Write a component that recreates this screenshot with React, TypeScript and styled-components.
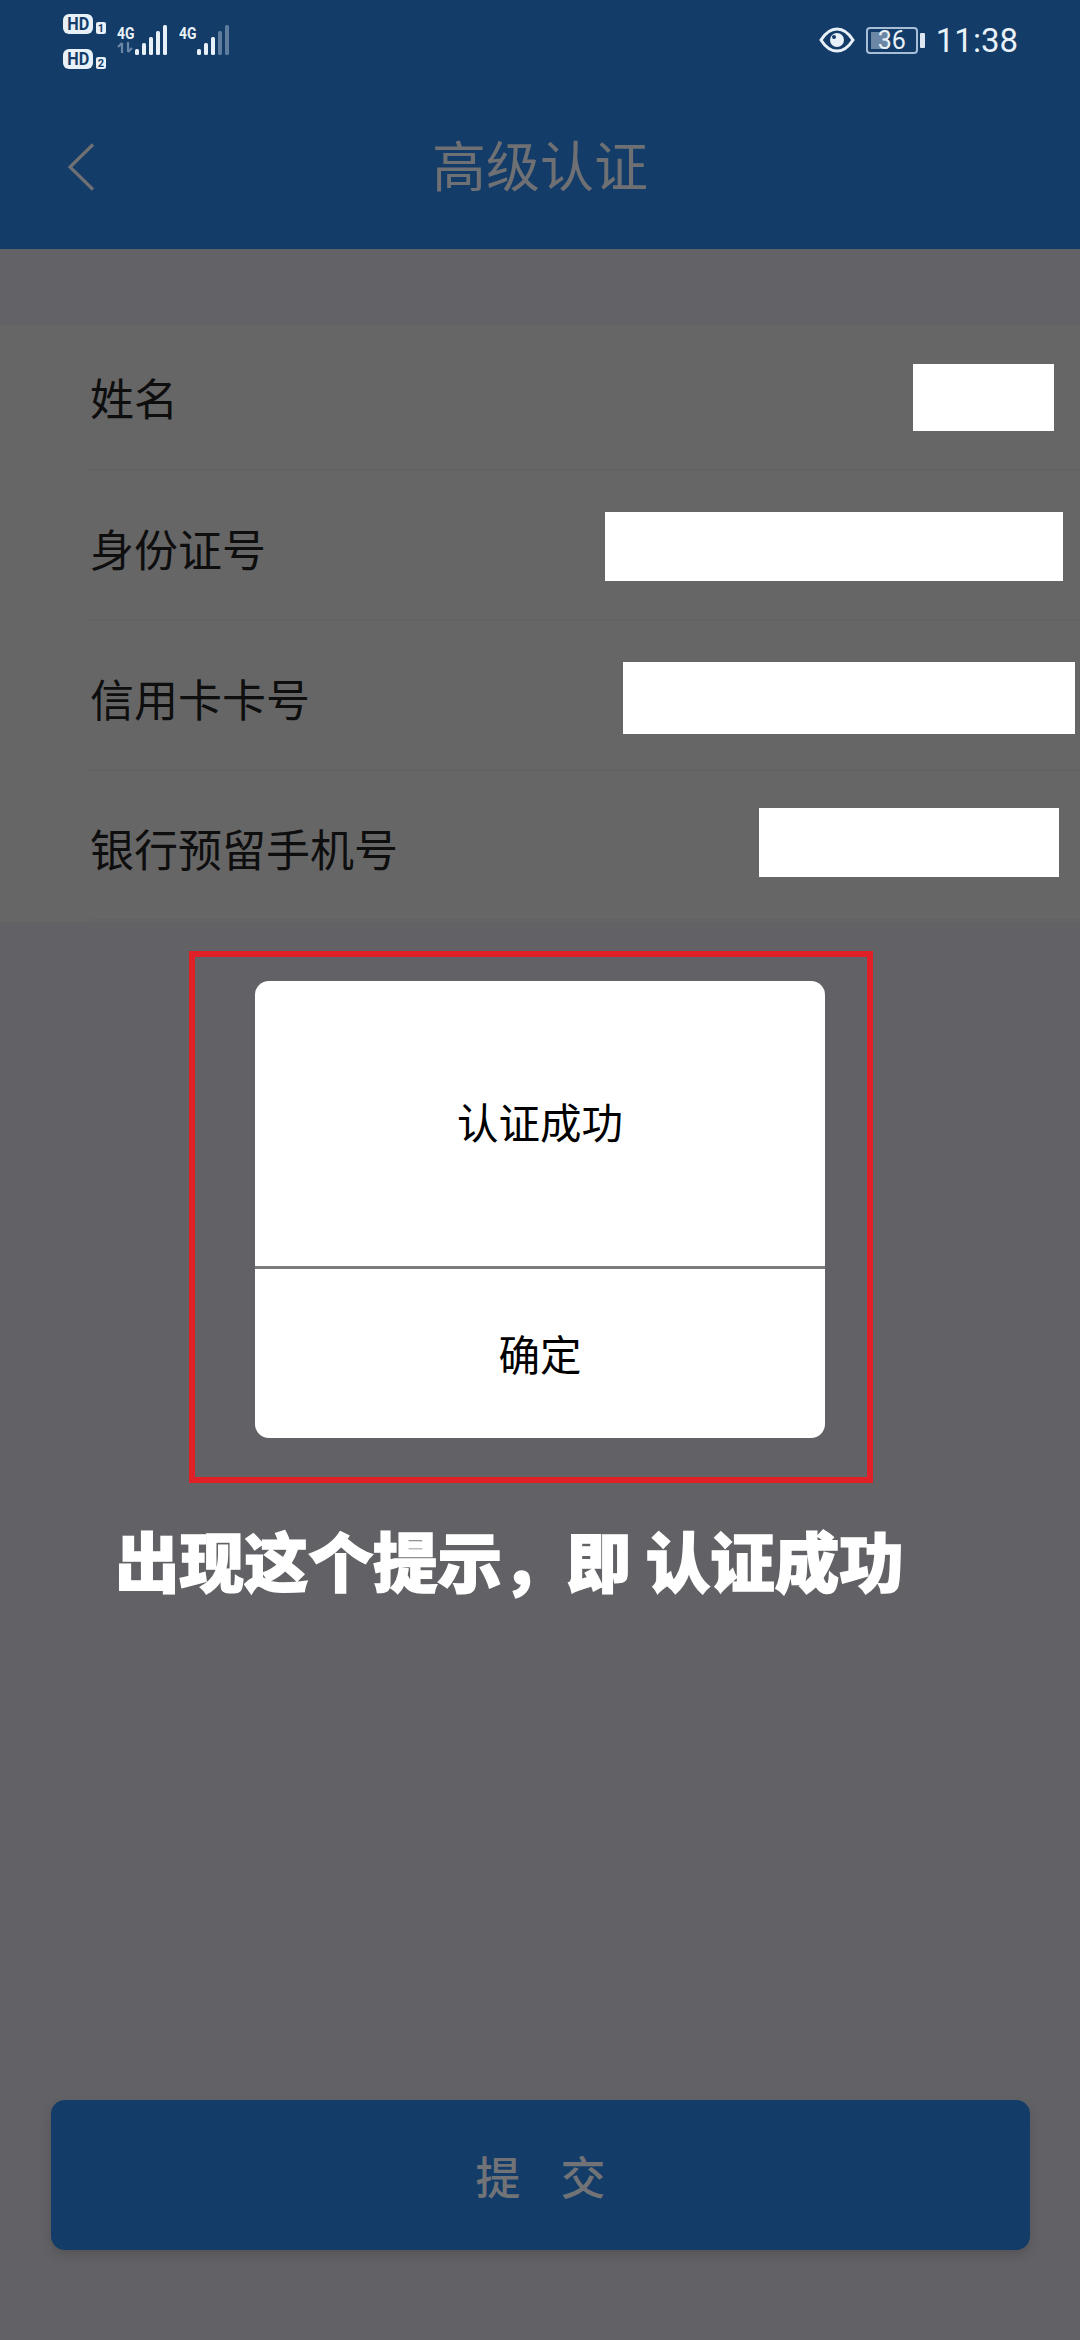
import styled, { createGlobalStyle } from "styled-components";

const GlobalStyle = createGlobalStyle`
  html, body {
    margin: 0;
    padding: 0;
    background: #626266;
  }
  * {
    box-sizing: border-box;
  }
`;

const Page = styled.div`
  width: 1080px;
  height: 2340px;
  display: flex;
  flex-direction: column;
  overflow: hidden;
  background: #626266;
  font-family: "Noto Sans CJK SC", "Liberation Sans", sans-serif;
`;

const Header = styled.header`
  height: 249px;
  flex-shrink: 0;
  display: flex;
  flex-direction: column;
  background: #133c68;
`;

const StatusBar = styled.div`
  height: 70px;
  padding: 14px 63px 0;
  display: flex;
  justify-content: space-between;
  align-items: flex-start;
`;

const StatusLeft = styled.div`
  display: flex;
  align-items: flex-start;
`;

const SimStack = styled.div`
  display: flex;
  flex-direction: column;
  gap: 15px;
`;

const SimRow = styled.div`
  display: flex;
  align-items: flex-end;
  gap: 3px;
`;

const HdBadge = styled.span`
  width: 30px;
  height: 20px;
  display: flex;
  align-items: center;
  justify-content: center;
  border-radius: 6px;
  background: #e8f0f8;
  color: #133c68;
  font: 700 18px/1 "Roboto", sans-serif;
`;

const HdLetters = styled.span`
  display: block;
  transform: scaleX(0.9);
`;

const SimIndex = styled.span`
  width: 10px;
  height: 12px;
  display: flex;
  align-items: center;
  justify-content: center;
  border-radius: 2px;
  background: #e8f0f8;
  color: #133c68;
  font: 700 11px/1 "Roboto", sans-serif;
`;

const Network = styled.div<{ $gap: number }>`
  margin: 11px 0 0 ${(p) => p.$gap}px;
  display: flex;
  align-items: flex-start;
`;

const NetworkLabel = styled.div`
  width: 18px;
  height: 30px;
  display: flex;
  flex-direction: column;
`;

const NetworkText = styled.span`
  display: block;
  height: 17px;
  color: #e8f0f8;
  font: 700 17px/17px "Roboto", sans-serif;
  white-space: nowrap;
  transform: scaleX(0.82);
  transform-origin: left center;
`;

const StatusRight = styled.div`
  display: flex;
  align-items: center;
  height: 40px;
  margin-top: 6px;
`;

const EyeIcon = styled.svg`
  width: 36px;
  height: 28px;
`;

const Battery = styled.div`
  position: relative;
  width: 52px;
  height: 27px;
  margin-left: 11px;
  border: 2px solid #a7bed6;
  border-radius: 4px;
  display: flex;
  align-items: center;
  justify-content: center;
  color: #e8f0f8;
  font: 400 25px/1 "Roboto", sans-serif;
`;

const BatteryFill = styled.span`
  position: absolute;
  left: 3px;
  top: 3px;
  bottom: 3px;
  width: 17px;
  background: #6c86a5;
`;

const BatteryText = styled.span`
  position: relative;
`;

const BatteryNub = styled.span`
  width: 5px;
  height: 15px;
  margin-left: 2px;
  border-radius: 1px;
  background: #dfe8f2;
`;

const Clock = styled.span`
  margin-left: 11px;
  margin-right: -1px;
  color: #e8f0f8;
  font: 400 33px/1 "Roboto", sans-serif;
`;

const NavRow = styled.div`
  flex: 1;
  padding: 9px 0 0 68px;
  display: grid;
  grid-template-columns: 404px 136px 1fr;
  align-items: center;
`;

const BackIcon = styled.svg`
  width: 28px;
  height: 48px;
  margin-top: 6px;
`;

const Title = styled.h1`
  margin: 0;
  color: #6f7073;
  font-size: 54px;
  font-weight: 400;
  line-height: 1;
  white-space: nowrap;
  justify-self: center;
`;

const Band = styled.div`
  height: 76px;
  flex-shrink: 0;
  background: #636367;
`;

const Form = styled.section`
  height: 597px;
  flex-shrink: 0;
  padding-left: 90px;
  background: #666667;
`;

const FormRow = styled.div<{ $first?: boolean }>`
  height: ${(p) => (p.$first ? 146 : 150)}px;
  padding-top: ${(p) => (p.$first ? 0 : 6)}px;
  display: flex;
  align-items: center;
  justify-content: space-between;
  border-bottom: 2px solid #636365;
`;

const RowLabel = styled.span`
  color: #0e0e0e;
  font-size: 44px;
  line-height: 1;
  white-space: nowrap;
`;

const Redaction = styled.div<{ $width: number; $height: number; $right: number; $lift: number }>`
  width: ${(p) => p.$width}px;
  height: ${(p) => p.$height}px;
  margin-right: ${(p) => p.$right}px;
  margin-bottom: ${(p) => p.$lift}px;
  background: #fff;
`;

const RedFrame = styled.div`
  width: 684px;
  height: 532px;
  margin: 29px 0 0 189px;
  padding: 24px 0 0 60px;
  flex-shrink: 0;
  border: 6px solid #e01f26;
`;

const Dialog = styled.div`
  width: 570px;
  height: 457px;
  display: flex;
  flex-direction: column;
  border-radius: 14px;
  background: #fff;
`;

const DialogMessage = styled.div`
  height: 288px;
  padding-bottom: 4px;
  display: flex;
  align-items: center;
  justify-content: center;
  border-bottom: 3px solid #7c7c7e;
  color: #000;
  font-size: 41.5px;
  line-height: 1;
`;

const DialogAction = styled.div`
  flex: 1;
  display: flex;
  align-items: center;
  justify-content: center;
  color: #000;
  font-size: 41.5px;
  line-height: 1;
`;

const Annotation = styled.p`
  margin: 36px 0 0 115px;
  color: #fff;
  font-size: 64.5px;
  font-weight: 900;
  line-height: 80px;
  white-space: pre;
  -webkit-text-stroke: 1.5px #fff;
`;

const SubmitButton = styled.button`
  width: 979px;
  height: 150px;
  margin: auto 0 90px 51px;
  flex-shrink: 0;
  border: none;
  border-radius: 14px;
  background: #133c68;
  box-shadow: 0 5px 10px rgba(40, 40, 40, 0.22);
  color: #727376;
  font-family: inherit;
  font-size: 45px;
  font-weight: 500;
  letter-spacing: 40px;
  text-indent: 40px;
`;

const bars = [
  { x: 0, y: 24, h: 6 },
  { x: 7, y: 18, h: 12 },
  { x: 14, y: 12, h: 18 },
  { x: 21, y: 6, h: 24 },
  { x: 28, y: 0, h: 30 },
];

const Signal = ({ level }: { level: number }) => (
  <svg width="32" height="30" viewBox="0 0 32 30">
    {bars.map((b, i) => (
      <rect
        key={b.x}
        x={b.x}
        y={b.y}
        width="4"
        height={b.h}
        rx="1.5"
        fill={i < level ? "#e8f0f8" : "#5f7c9c"}
      />
    ))}
  </svg>
);

const DataArrows = () => (
  <svg width="17" height="11" viewBox="0 0 17 11">
    <path
      d="M5 11V1M1 5l4-4M11 0v10M15 6l-4 4"
      stroke="#6c86a5"
      strokeWidth="2.2"
      fill="none"
    />
  </svg>
);

const rows = [
  { label: "姓名", width: 141, height: 67, right: 26, lift: 0 },
  { label: "身份证号", width: 458, height: 69, right: 17, lift: 3 },
  { label: "信用卡卡号", width: 452, height: 72, right: 5, lift: 0 },
  { label: "银行预留手机号", width: 300, height: 69, right: 21, lift: 12 },
];

export default function App() {
  return (
    <Page>
      <GlobalStyle />
      <Header>
        <StatusBar>
          <StatusLeft>
            <SimStack>
              <SimRow>
                <HdBadge><HdLetters>HD</HdLetters></HdBadge>
                <SimIndex>1</SimIndex>
              </SimRow>
              <SimRow>
                <HdBadge><HdLetters>HD</HdLetters></HdBadge>
                <SimIndex>2</SimIndex>
              </SimRow>
            </SimStack>
            <Network $gap={11}>
              <NetworkLabel>
                <NetworkText>4G</NetworkText>
                <DataArrows />
              </NetworkLabel>
              <Signal level={5} />
            </Network>
            <Network $gap={12}>
              <NetworkLabel>
                <NetworkText>4G</NetworkText>
              </NetworkLabel>
              <Signal level={3} />
            </Network>
          </StatusLeft>
          <StatusRight>
            <EyeIcon viewBox="0 0 36 28">
              <path
                d="M2 14C7 6 12 3 18 3s11 3 16 11c-5 8-10 11-16 11S7 22 2 14z"
                fill="none"
                stroke="#e8f0f8"
                strokeWidth="3"
              />
              <circle cx="18" cy="14" r="7" fill="#e8f0f8" />
              <circle cx="15" cy="11" r="2" fill="#133c68" />
            </EyeIcon>
            <Battery>
              <BatteryFill />
              <BatteryText>36</BatteryText>
            </Battery>
            <BatteryNub />
            <Clock>11:38</Clock>
          </StatusRight>
        </StatusBar>
        <NavRow>
          <BackIcon viewBox="0 0 28 48">
            <path d="M25 1.5 2 24l23 22.5" fill="none" stroke="#6f7073" strokeWidth="3.2" />
          </BackIcon>
          <Title>高级认证</Title>
        </NavRow>
      </Header>
      <Band />
      <Form>
        {rows.map((row, i) => (
          <FormRow key={row.label} $first={i === 0}>
            <RowLabel>{row.label}</RowLabel>
            <Redaction $width={row.width} $height={row.height} $right={row.right} $lift={row.lift} />
          </FormRow>
        ))}
      </Form>
      <RedFrame>
        <Dialog>
          <DialogMessage>认证成功</DialogMessage>
          <DialogAction>确定</DialogAction>
        </Dialog>
      </RedFrame>
      <Annotation>{"出现这个提示\uFF0C即 认证成功"}</Annotation>
      <SubmitButton>提交</SubmitButton>
    </Page>
  );
}
